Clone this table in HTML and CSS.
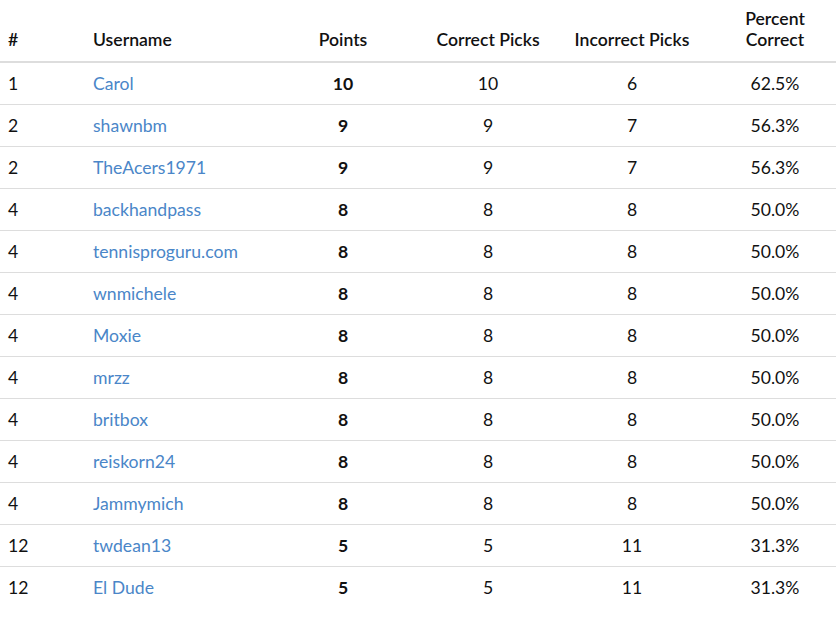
FILE: index.html
```html
<!DOCTYPE html>
<html>
<head>
<meta charset="utf-8">
<link rel="stylesheet" href="styles.css">
</head>
<body>
<table class="board">
  <colgroup>
    <col class="c-rank"><col class="c-user"><col class="c-pts"><col class="c-cor"><col class="c-inc"><col class="c-pct">
  </colgroup>
  <thead>
    <tr>
      <th class="left">#</th>
      <th class="left">Username</th>
      <th>Points</th>
      <th>Correct Picks</th>
      <th>Incorrect Picks</th>
      <th>Percent<br>Correct</th>
    </tr>
  </thead>
  <tbody>
    <tr><td class="left">1</td><td class="left"><a href="#">Carol</a></td><td class="pts">10</td><td>10</td><td>6</td><td>62.5%</td></tr>
    <tr><td class="left">2</td><td class="left"><a href="#">shawnbm</a></td><td class="pts">9</td><td>9</td><td>7</td><td>56.3%</td></tr>
    <tr><td class="left">2</td><td class="left"><a href="#">TheAcers1971</a></td><td class="pts">9</td><td>9</td><td>7</td><td>56.3%</td></tr>
    <tr><td class="left">4</td><td class="left"><a href="#">backhandpass</a></td><td class="pts">8</td><td>8</td><td>8</td><td>50.0%</td></tr>
    <tr><td class="left">4</td><td class="left"><a href="#">tennisproguru.com</a></td><td class="pts">8</td><td>8</td><td>8</td><td>50.0%</td></tr>
    <tr><td class="left">4</td><td class="left"><a href="#">wnmichele</a></td><td class="pts">8</td><td>8</td><td>8</td><td>50.0%</td></tr>
    <tr><td class="left">4</td><td class="left"><a href="#">Moxie</a></td><td class="pts">8</td><td>8</td><td>8</td><td>50.0%</td></tr>
    <tr><td class="left">4</td><td class="left"><a href="#">mrzz</a></td><td class="pts">8</td><td>8</td><td>8</td><td>50.0%</td></tr>
    <tr><td class="left">4</td><td class="left"><a href="#">britbox</a></td><td class="pts">8</td><td>8</td><td>8</td><td>50.0%</td></tr>
    <tr><td class="left">4</td><td class="left"><a href="#">reiskorn24</a></td><td class="pts">8</td><td>8</td><td>8</td><td>50.0%</td></tr>
    <tr><td class="left">4</td><td class="left"><a href="#">Jammymich</a></td><td class="pts">8</td><td>8</td><td>8</td><td>50.0%</td></tr>
    <tr><td class="left">12</td><td class="left"><a href="#">twdean13</a></td><td class="pts">5</td><td>5</td><td>11</td><td>31.3%</td></tr>
    <tr class="last"><td class="left">12</td><td class="left"><a href="#">El Dude</a></td><td class="pts">5</td><td>5</td><td>11</td><td>31.3%</td></tr>
  </tbody>
</table>
</body>
</html>
```
FILE: styles.css
```css
html, body {
  margin: 0;
  padding: 0;
  background: #fff;
}
body {
  font-family: Lato, "Open Sans", sans-serif;
  font-size: 17.6px;
  color: #111;
}
.board {
  width: 836px;
  border-collapse: collapse;
  table-layout: fixed;
}
.c-rank { width: 85px; }
.c-user { width: 175px; }
.c-pts { width: 166px; }
.c-cor { width: 124px; }
.c-inc { width: 164px; }
.c-pct { width: 122px; }
.board th {
  font-weight: 600;
  text-align: center;
  vertical-align: bottom;
  line-height: 21px;
  padding: 8px 8px 11px 8px;
  border-bottom: 2px solid #ddd;
}
.board td {
  text-align: center;
  vertical-align: middle;
  height: 41px;
  padding: 0 8px;
  border-bottom: 1px solid #ddd;
  line-height: 21px;
}
.board tr.last td {
  border-bottom: none;
}
.board .left {
  text-align: left;
}
.board .pts {
  font-weight: 700;
}
.board a {
  color: #4a86c8;
  text-decoration: none;
}
```
